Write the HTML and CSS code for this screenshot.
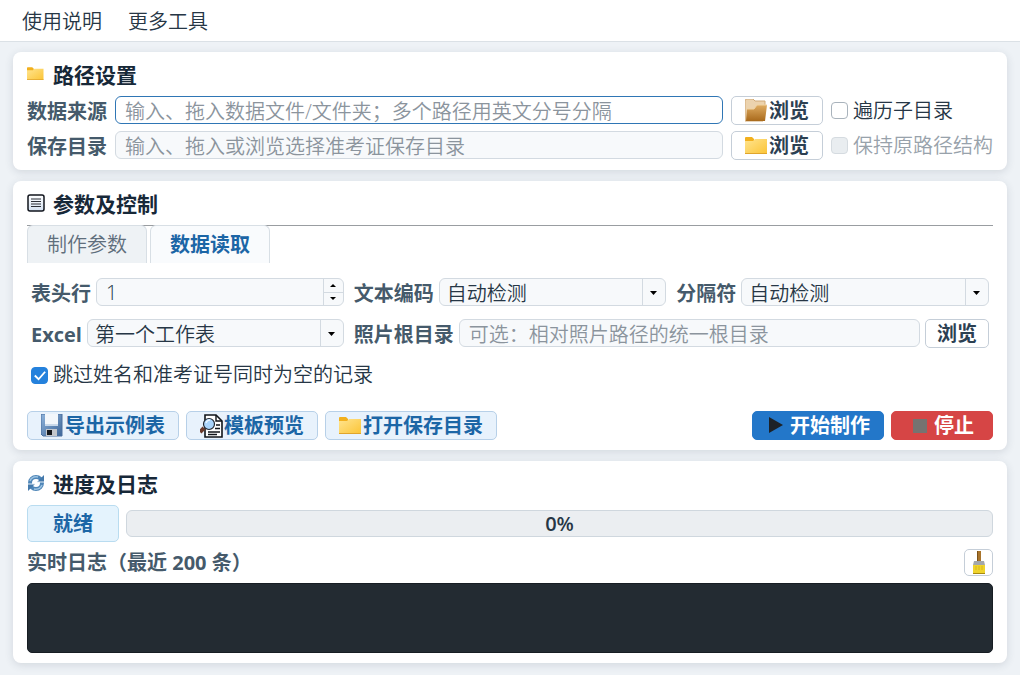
FILE: index.html
```html
<!DOCTYPE html>
<html lang="zh-CN">
<head>
    <meta charset="UTF-8">
    <meta name="viewport" content="width=device-width, initial-scale=1.0">
    <title>准考证制作</title>
    <link rel="stylesheet" href="styles.css">
</head>
<body>
    <!-- shared icons -->
    <svg class="defs" width="0" height="0" aria-hidden="true">
        <defs>
            <linearGradient id="yellow" x1="0" y1="0" x2="1" y2="1">
                <stop offset="0" stop-color="#ffe48f"/>
                <stop offset="1" stop-color="#fbc435"/>
            </linearGradient>
            <linearGradient id="brown" x1="0" y1="0" x2="0" y2="1">
                <stop offset="0" stop-color="#dfac62"/>
                <stop offset="1" stop-color="#a96a1c"/>
            </linearGradient>
            <linearGradient id="steel" x1="0" y1="0" x2="1" y2="1">
                <stop offset="0" stop-color="#8fb4dc"/>
                <stop offset="1" stop-color="#3e6698"/>
            </linearGradient>
            <linearGradient id="paper" x1="0" y1="0" x2="0" y2="1">
                <stop offset="0" stop-color="#ffffff"/>
                <stop offset="1" stop-color="#d5e2f2"/>
            </linearGradient>
        </defs>
        <symbol id="folder" viewBox="1 1 24 24">
            <path d="M1 5q0-1 1-1h6l2 2v5H1z" fill="#f2b01e"/>
            <path d="M1 8h8l2-2h12v15H1z" fill="url(#yellow)"/>
            <path d="M1 20h22v1H1z" fill="#e0a52c"/>
        </symbol>
    </svg>

    <nav class="menu">
        <button type="button">使用说明</button>
        <button type="button">更多工具</button>
    </nav>

    <main>
        <section class="card">
            <h2><svg class="title-icon"><use href="#folder"/></svg>路径设置</h2>
            <div class="path-grid">
                <label class="name" for="source">数据来源</label>
                <input class="field active" type="text" id="source" placeholder="输入、拖入数据文件/文件夹；多个路径用英文分号分隔">
                <button class="btn" type="button">
                    <svg class="icon" viewBox="1 1 24 24">
                        <path d="M1 3l1-2h7l2 2h10v6l-2 14H1z" fill="#ecd3ae" stroke="#d0aa78"/>
                        <path d="M2 23l1-12h7l3-4h10l-2 16z" fill="url(#brown)"/>
                        <path d="M3 11h7l3-4h10" fill="none" stroke="#f0d2a0"/>
                    </svg>浏览
                </button>
                <label class="check"><input type="checkbox">遍历子目录</label>

                <label class="name" for="target">保存目录</label>
                <input class="field" type="text" id="target" placeholder="输入、拖入或浏览选择准考证保存目录">
                <button class="btn" type="button"><svg class="icon"><use href="#folder"/></svg>浏览</button>
                <label class="check"><input type="checkbox" disabled>保持原路径结构</label>
            </div>
        </section>

        <section class="card">
            <h2>
                <svg class="title-icon" viewBox="0 0 18 18">
                    <rect x="1" y="1" width="16" height="16" rx="2" fill="url(#paper)" stroke="#10141c" stroke-width="1.500"/>
                    <path d="M4 5h10M4 7.500h10M4 10h10M4 12.500h10" stroke="#2c3038" stroke-width="1.200"/>
                </svg>参数及控制
            </h2>
            <div class="tabs" role="tablist">
                <button type="button" role="tab" aria-selected="false">制作参数</button>
                <button type="button" role="tab" aria-selected="true">数据读取</button>
            </div>
            <div class="form-grid">
                <div class="group">
                    <label class="name" for="header-row">表头行</label>
                    <div class="spin">
                        <input type="number" id="header-row" value="1" min="1">
                        <div class="steps">
                            <button type="button" class="up" aria-label="增加"></button>
                            <button type="button" class="down" aria-label="减少"></button>
                        </div>
                    </div>
                </div>
                <div class="group">
                    <label class="name" for="encoding">文本编码</label>
                    <select class="field" id="encoding"><option>自动检测</option></select>
                </div>
                <div class="group">
                    <label class="name" for="separator">分隔符</label>
                    <select class="field" id="separator"><option>自动检测</option></select>
                </div>
                <div class="group">
                    <label class="name" for="sheet">Excel</label>
                    <select class="field" id="sheet"><option>第一个工作表</option></select>
                </div>
                <div class="group wide">
                    <label class="name" for="photo-root">照片根目录</label>
                    <input class="field" type="text" id="photo-root" placeholder="可选：相对照片路径的统一根目录">
                    <button class="btn small" type="button">浏览</button>
                </div>
                <label class="check skip"><input type="checkbox" checked>跳过姓名和准考证号同时为空的记录</label>
            </div>
            <div class="actions">
                <button class="btn light" type="button">
                    <svg class="icon" viewBox="1 1 24 24">
                        <path d="M1 1h21v22H3l-2-2z" fill="url(#steel)" stroke="#4a6f9e"/>
                        <path d="M5 1h13v12H5z" fill="#f3f7fb"/>
                        <path d="M5 11h13v2H5z" fill="#c9d9ea"/>
                        <path d="M6 16h11v7H6z" fill="#c3c7cc"/>
                        <path d="M7 17h5v5H7z" fill="#14181e"/>
                    </svg>导出示例表
                </button>
                <button class="btn light" type="button">
                    <svg class="icon" viewBox="1 0 24 24">
                        <path d="M6 1h11l6 6v16H6z" fill="#fff" stroke="#10141a" stroke-width="1.600"/>
                        <path d="M17 1v6h6" fill="none" stroke="#10141a" stroke-width="1.400"/>
                        <path d="M17 11h4M16 14.500h5M9 18h12M9 20.500h9" stroke="#10141a" stroke-width="1.400"/>
                        <path d="M5 14l-4 4" stroke="#6b3a2a" stroke-width="4"/>
                        <circle cx="10" cy="10" r="5.500" fill="#a9d4fb" stroke="#20262e" stroke-width="1.200"/>
                        <path d="M7 9q1-3 4-3" fill="none" stroke="#e8f5ff" stroke-width="1.500"/>
                    </svg>模板预览
                </button>
                <button class="btn light" type="button"><svg class="icon"><use href="#folder"/></svg>打开保存目录</button>
                <button class="btn start" type="button">
                    <svg class="icon" viewBox="1 1 24 24"><path d="M4 4l14 8-14 8z" fill="#1d2227"/></svg>开始制作
                </button>
                <button class="btn stop" type="button">
                    <svg class="icon" viewBox="0 0 24 24"><path d="M3 5h14v14H3z" fill="#757371"/></svg>停止
                </button>
            </div>
        </section>

        <section class="card">
            <h2>
                <svg class="title-icon" viewBox="0 0 18 18">
                    <circle cx="9" cy="9" r="6" fill="none" stroke="#4f86b8" stroke-width="4"/>
                    <path d="M1 17v-7h7l-3 3zM17 1v7h-7l3-3z" fill="#4479ab"/>
                    <path d="M1 10h7M10 8h7" stroke="#e5eff7" stroke-width="1"/>
                    <path d="M3 7q2-5 8-4M15 11q-2 5-8 4" fill="none" stroke="#9cc3e2" stroke-width="1.500"/>
                </svg>进度及日志
            </h2>
            <div class="status-row">
                <span class="status">就绪</span>
                <div class="progress" role="progressbar" aria-valuenow="0" aria-valuemin="0" aria-valuemax="100">0%</div>
            </div>
            <div class="log-head">
                <label class="name" for="log">实时日志（最近 200 条）</label>
                <button class="btn clear" type="button" aria-label="清空日志">
                    <svg viewBox="0 0 16 24">
                        <path d="M6 0h4v12H6z" fill="#a8742c"/>
                        <path d="M6 0h1v12H6z" fill="#7d5218"/>
                        <path d="M3 10h10l1 4H2z" fill="#a3a7ab"/>
                        <path d="M2 14h12v9H2z" fill="#efd32c"/>
                        <path d="M5 15v4M8 15v4M11 15v4" stroke="#d8b71a"/>
                        <path d="M2 22.500h12" stroke="#a78a10"/>
                    </svg>
                </button>
            </div>
            <textarea class="log" id="log" readonly></textarea>
        </section>
    </main>
</body>
</html>
```
FILE: styles.css
```css
*{
    box-sizing: border-box;
}
body{
    margin: 0;
    background-color: #eef2f6;
    color: #263645;
    font-size: 20px;
    font-weight: 350;
    line-height: 26px;
    font-family: "Open Sans", "Noto Sans CJK SC", sans-serif;
}
button,input,select,textarea{
    font: inherit;
    color: inherit;
    margin: 0;
    padding: 0;
}
button{
    border: none;
    background: none;
    white-space: nowrap;
}
.defs{
    position: absolute;
}

/* top menu */
.menu{
    display: flex;
    gap: 26px;
    padding: 9px 22px 6px;
    background-color: #fff;
    border-bottom: 1px solid #dbe1e6;
}

/* cards */
main{
    display: flex;
    flex-direction: column;
    gap: 11px;
    padding: 10px 13px 12px;
}
.card{
    padding: 10px 14px;
    background-color: #fff;
    border-radius: 8px;
    box-shadow: 0 2px 8px rgba(40, 60, 80, 0.14);
}
h2{
    display: flex;
    align-items: center;
    gap: 8px;
    margin: 0 0 8px;
    font-size: 21px;
    line-height: 26px;
    font-weight: 700;
    color: #172838;
}
.title-icon{
    width: 18px;
    height: 18px;
    margin-bottom: 2px;
}
.name{
    font-weight: 700;
    color: #455a6b;
    white-space: nowrap;
}

/* fields */
.field,.spin{
    min-width: 0;
    width: 100%;
    height: 28px;
    border: 1px solid #d3dae1;
    border-radius: 6px;
    background-color: #f7f9fb;
}
.field{
    padding: 2px 9px 0;
    outline: none;
}
.field.active{
    background-color: #fff;
    border-color: #2f76b5;
}
.field::placeholder{
    color: #8b949d;
    opacity: 1;
}
select.field{
    appearance: none;
    padding: 2px 26px 0 7px;
    background-image: url("data:image/svg+xml,%3Csvg xmlns='http://www.w3.org/2000/svg' width='23' height='26'%3E%3Cpath d='M0 0h1v26H0z' fill='%23d3dae1'/%3E%3Cpath d='M8 12h7l-3.500 4z' fill='%23000'/%3E%3C/svg%3E");
    background-repeat: no-repeat;
    background-position: right center;
}
.spin{
    display: flex;
}
.spin input{
    flex: 1;
    min-width: 0;
    padding: 2px 9px 0;
    border: none;
    outline: none;
    background: none;
    appearance: textfield;
}
.spin input::-webkit-inner-spin-button{
    appearance: none;
}
.steps{
    display: flex;
    flex-direction: column;
    width: 20px;
    border-left: 1px solid #d3dae1;
}
.steps button{
    flex: 1;
    display: flex;
    align-items: center;
    justify-content: center;
}
.steps .down{
    border-top: 1px solid #d3dae1;
}
.steps button::before{
    content: "";
    border: 3px solid transparent;
}
.steps .up::before{
    border-top: none;
    border-bottom-color: #000;
}
.steps .down::before{
    border-bottom: none;
    border-top-color: #000;
}
.check{
    display: flex;
    align-items: center;
    gap: 5px;
    white-space: nowrap;
}
.check input{
    appearance: none;
    width: 17px;
    height: 17px;
    border: 1px solid #a9b3bc;
    border-radius: 4px;
    background-color: #fff;
}
.check input:checked{
    border-color: #2481dc;
    background: #2481dc url("data:image/svg+xml,%3Csvg xmlns='http://www.w3.org/2000/svg' viewBox='0 0 16 16'%3E%3Cpath d='M3 8l4 4 7-8' fill='none' stroke='%23fff' stroke-width='2'/%3E%3C/svg%3E") center / 15px no-repeat;
}
.check input:disabled{
    border-color: #d5dbe0;
    background-color: #e9edf0;
}
.check:has(:disabled){
    color: #98a2ab;
}

/* buttons */
.btn{
    display: flex;
    align-items: center;
    justify-content: center;
    height: 29px;
    padding: 1px 13px 0;
    border: 1px solid #c5ced8;
    border-radius: 5px;
    background-color: #fff;
    color: #2c4052;
    font-weight: 700;
}
.icon{
    width: 24px;
    height: 24px;
}
.btn.small{
    flex: none;
    width: 64px;
}
.btn.light{
    border-color: #b7d0e8;
    background-color: #e8f2fc;
    color: #1c66a6;
}
.btn.start{
    margin-left: auto;
    border-color: #2377c9;
    background-color: #2377c9;
    color: #fff;
}
.btn.stop{
    padding: 1px 18px 0;
    border-color: #d64545;
    background-color: #d64545;
    color: #fff;
}

/* paths */
.path-grid{
    display: grid;
    grid-template-columns: auto 1fr auto auto;
    gap: 6px 8px;
}

/* tabs and parameters */
.tabs{
    display: flex;
    gap: 3px;
    border-top: 1px solid #999da1;
}
.tabs button{
    height: 38px;
    margin-top: -1px;
    padding: 1px 19px 0;
    border: 1px solid #d8dfe5;
    border-bottom: none;
    border-radius: 6px 6px 0 0;
    background-color: #eef2f5;
    color: #5f6e7c;
}
.tabs button[aria-selected="true"]{
    background-color: #f9fbfd;
    color: #1c66a6;
    font-weight: 700;
}
.form-grid{
    display: grid;
    grid-template-columns: repeat(3, 1fr);
    gap: 12px 10px;
    padding: 15px 4px 21px;
}
.group{
    display: flex;
    gap: 5px;
    min-width: 0;
    height: 29px;
}
.group .name,.path-grid .name{
    line-height: 31px;
    height: 29px;
}
.wide{
    grid-column: span 2;
}
.skip{
    grid-column: 1 / -1;
    height: 30px;
}
.actions{
    display: flex;
    gap: 7px;
}

/* progress and log */
.status-row{
    display: flex;
    align-items: center;
    gap: 7px;
}
.status{
    width: 92px;
    border: 1px solid #b9dcf0;
    border-radius: 5px;
    background-color: #e4f3fd;
    color: #1c66a6;
    font-weight: 700;
    line-height: 35px;
    text-align: center;
}
.progress{
    flex: 1;
    border: 1px solid #cfd7de;
    border-radius: 6px;
    background-color: #ebeef1;
    font-weight: 600;
    line-height: 25px;
    text-align: center;
}
.log-head{
    display: flex;
    align-items: center;
    justify-content: space-between;
    margin: 7px 0;
}
.btn.clear{
    width: 29px;
    height: 27px;
    padding: 0;
}
.clear svg{
    width: 16px;
    height: 24px;
}
.log{
    display: block;
    width: 100%;
    height: 70px;
    padding: 6px;
    border: 1px solid #171d23;
    border-radius: 5px;
    outline: none;
    resize: none;
    background-color: #232b32;
    color: #dce3e9;
}
```
